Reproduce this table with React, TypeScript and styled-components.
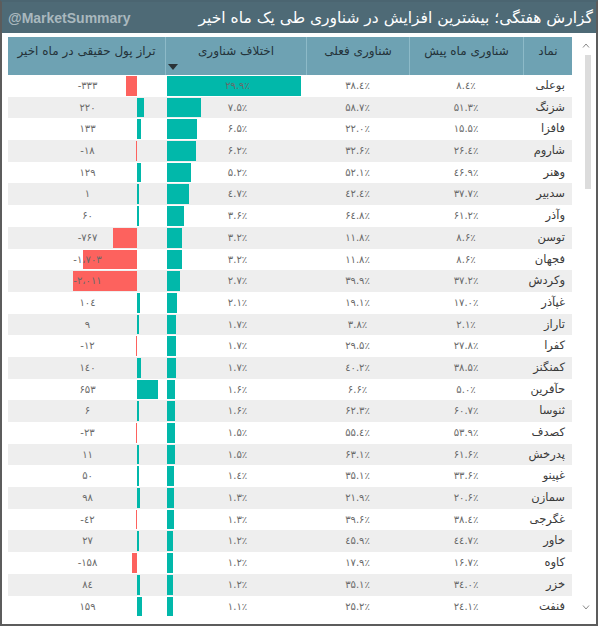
import React from 'react';
import styled, { createGlobalStyle } from 'styled-components';

const Global = createGlobalStyle`
  html, body { margin: 0; padding: 0; background: #ffffff; }
  body { font-family: "DejaVu Sans", sans-serif; }
`;

type Row = [string, string, string, string, number, string, number];

const fa = (s: string) =>
  s
    .replace(/[0-9]/g, (d) => '۰۱۲۳٤۵۶۷۸۹'[Number(d)])
    .replace('%', '٪')
    .replace(',', '،');

const rows: Row[] = [
  ['بوعلی', '8.4%', '38.4%', '29.9%', 29.9, '-333', -333],
  ['شزنگ', '51.3%', '58.7%', '7.5%', 7.5, '220', 220],
  ['فافزا', '15.5%', '22.0%', '6.5%', 6.5, '133', 133],
  ['شاروم', '26.4%', '32.6%', '6.2%', 6.2, '-18', -18],
  ['وهنر', '46.9%', '52.1%', '5.2%', 5.2, '129', 129],
  ['سدبیر', '37.7%', '42.4%', '4.7%', 4.7, '1', 1],
  ['وآذر', '61.2%', '64.8%', '3.6%', 3.6, '60', 60],
  ['توسن', '8.6%', '11.8%', '3.2%', 3.2, '-767', -767],
  ['فجهان', '8.6%', '11.8%', '3.2%', 3.2, '-1,703', -1703],
  ['وکردش', '37.2%', '39.9%', '2.7%', 2.7, '-2,011', -2011],
  ['غپآذر', '17.0%', '19.1%', '2.1%', 2.1, '104', 104],
  ['تاراز', '2.1%', '3.8%', '1.7%', 1.7, '9', 9],
  ['کفرا', '27.8%', '29.5%', '1.7%', 1.7, '-12', -12],
  ['کمنگنز', '38.5%', '40.2%', '1.7%', 1.7, '140', 140],
  ['حآفرین', '5.0%', '6.6%', '1.6%', 1.6, '653', 653],
  ['ثنوسا', '60.7%', '62.3%', '1.6%', 1.6, '6', 6],
  ['کصدف', '53.9%', '55.4%', '1.5%', 1.5, '-23', -23],
  ['پدرخش', '61.6%', '63.1%', '1.5%', 1.5, '11', 11],
  ['غپینو', '33.6%', '35.1%', '1.4%', 1.4, '50', 50],
  ['سمازن', '20.6%', '21.9%', '1.3%', 1.3, '98', 98],
  ['غگرجی', '38.4%', '39.6%', '1.3%', 1.3, '-42', -42],
  ['خاور', '44.7%', '45.9%', '1.2%', 1.2, '27', 27],
  ['کاوه', '16.7%', '17.9%', '1.2%', 1.2, '-158', -158],
  ['خزر', '34.0%', '35.1%', '1.2%', 1.2, '84', 84],
  ['فنفت', '24.1%', '25.2%', '1.1%', 1.1, '159', 159],
];

const COLS = '49px 114px 103px 141px 157px';

const Frame = styled.div`
  width: 598px;
  height: 626px;
  box-sizing: border-box;
  border: 2px solid #5c5c5c;
  border-top-color: #4b6571;
  display: flex;
  flex-direction: column;
  background: #ffffff;
`;

const TitleBar = styled.header`
  height: 31px;
  flex: none;
  background: #4e6a76;
  display: flex;
  align-items: center;
  justify-content: space-between;
  padding: 0 3px 0 6px;
`;

const Handle = styled.span`
  font-family: "Liberation Sans", Arial, sans-serif;
  font-weight: bold;
  font-size: 14px;
  color: #a9b8be;
`;

const Title = styled.h1`
  margin: 0;
  font-family: "DejaVu Sans", sans-serif;
  font-weight: normal;
  font-size: 15.5px;
  color: #ffffff;
  direction: rtl;
  white-space: nowrap;
`;

const Content = styled.div`
  flex: 1;
  display: flex;
  gap: 5px;
  padding: 4px 0 0 6px;
  min-height: 0;
`;

const Table = styled.div`
  width: 564px;
  display: flex;
  flex-direction: column;
  direction: rtl;
`;

const HeaderRow = styled.div`
  display: grid;
  grid-template-columns: ${COLS};
  height: 38px;
  background: #6ea2b3;
`;

const HeaderCell = styled.div`
  display: flex;
  flex-direction: column;
  align-items: center;
  padding-top: 6px;
  box-sizing: border-box;
  font-size: 12px;
  line-height: 16px;
  color: #24333a;
  border-left: 1px solid #8dbac8;
  white-space: nowrap;
  &:last-child {
    border-left: none;
  }
`;

const SortArrow = styled.span`
  align-self: flex-end;
  margin: auto 0 5px 2px;
  width: 0;
  height: 0;
  border-left: 5px solid transparent;
  border-right: 5px solid transparent;
  border-top: 6px solid #2a3236;
`;

const DataRow = styled.div<{ $alt: boolean }>`
  display: grid;
  grid-template-columns: ${COLS};
  height: 21.7px;
  background: ${(p) => (p.$alt ? '#eeeeee' : '#ffffff')};
`;

const SymbolCell = styled.div`
  padding-right: 7px;
  font-size: 11.5px;
  line-height: 21.7px;
  color: #3a3a3a;
  white-space: nowrap;
`;

const ValueCell = styled.div`
  position: relative;
  text-align: center;
  font-size: 10px;
  line-height: 21.7px;
  color: #6a6a6a;
  direction: ltr;
  white-space: nowrap;
`;

const Bar = styled.span<{ $neg?: boolean }>`
  position: absolute;
  top: 1px;
  bottom: 1px;
  background: ${(p) => (p.$neg ? '#fd625e' : '#01b8aa')};
`;

const Label = styled.span<{ $shift?: number }>`
  position: relative;
  margin-right: ${(p) => p.$shift ?? 0}px;
`;

const ScrollBar = styled.div`
  width: 18px;
  display: flex;
  flex-direction: column;
  align-items: center;
  padding-top: 6px;
  padding-bottom: 14px;
  box-sizing: border-box;
`;

const Thumb = styled.div`
  width: 6px;
  height: 134px;
  margin-top: 7px;
  margin-left: 4px;
  background: #dcdcdc;
`;

const Spacer = styled.div`
  flex: 1;
`;

const Chevron = ({ up }: { up?: boolean }) => (
  <svg width="8" height="5" viewBox="0 0 8 5">
    <path
      d={up ? 'M1 4.5 L4 1 L7 4.5' : 'M1 0.5 L4 4 L7 0.5'}
      fill="none"
      stroke="#8a8a8a"
      strokeWidth="1"
    />
  </svg>
);

const DIFF_SCALE = 4.45;
const NET_SCALE = 0.0318;
const AXIS = 129;

export default function App() {
  return (
    <>
      <Global />
      <Frame>
        <TitleBar>
          <Handle>@MarketSummary</Handle>
          <Title>گزارش هفتگی؛ بیشترین افزایش در شناوری طی یک ماه اخیر</Title>
        </TitleBar>
        <Content>
          <Table>
            <HeaderRow>
              <HeaderCell>نماد</HeaderCell>
              <HeaderCell>شناوری ماه پیش</HeaderCell>
              <HeaderCell>شناوری فعلی</HeaderCell>
              <HeaderCell>
                اختلاف شناوری
                <SortArrow />
              </HeaderCell>
              <HeaderCell>تراز پول حقیقی در ماه اخیر</HeaderCell>
            </HeaderRow>
            {rows.map(([sym, prev, cur, diff, diffV, net, netV], i) => {
              const nw = Math.max(1.5, Math.abs(netV) * NET_SCALE);
              return (
                <DataRow key={sym} $alt={i % 2 === 1}>
                  <SymbolCell>{sym}</SymbolCell>
                  <ValueCell>{fa(prev)}</ValueCell>
                  <ValueCell>{fa(cur)}</ValueCell>
                  <ValueCell>
                    <Bar style={{ left: 2, width: 1 + diffV * DIFF_SCALE }} />
                    <Label $shift={-4}>{fa(diff)}</Label>
                  </ValueCell>
                  <ValueCell>
                    <Bar
                      $neg={netV < 0}
                      style={{ left: netV < 0 ? AXIS - nw : AXIS, width: nw }}
                    />
                    <Label $shift={-2}>{fa(net)}</Label>
                  </ValueCell>
                </DataRow>
              );
            })}
          </Table>
          <ScrollBar>
            <Chevron up />
            <Thumb />
            <Spacer />
            <Chevron />
          </ScrollBar>
        </Content>
      </Frame>
    </>
  );
}
